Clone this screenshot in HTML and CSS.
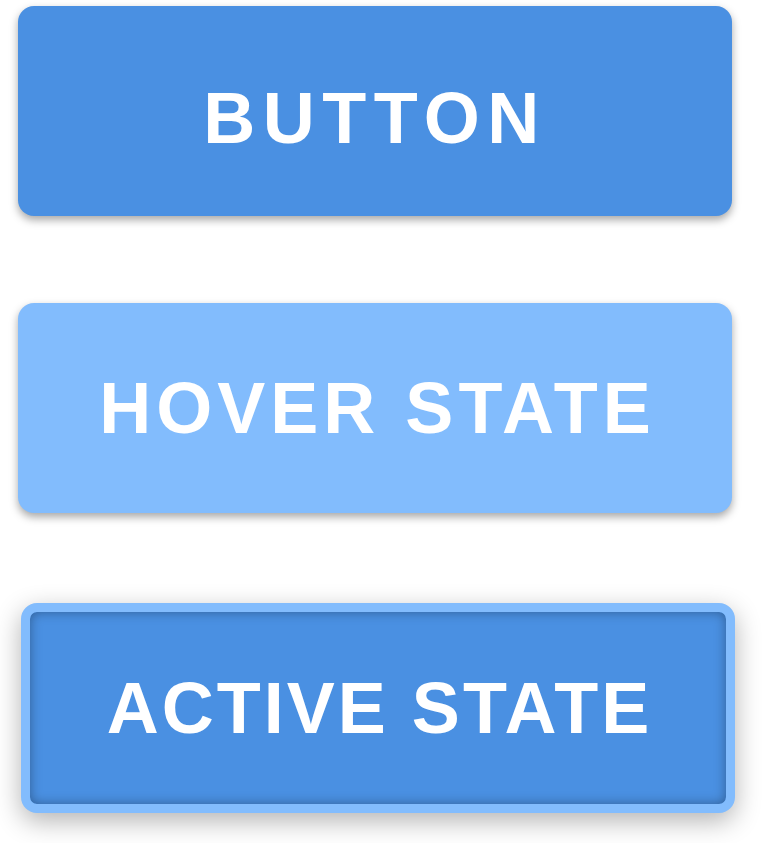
FILE: index.html
```html
<!DOCTYPE html>
<html lang="en">
<head>
    <meta charset="UTF-8">
    <meta name="viewport" content="width=device-width, initial-scale=1.0">
    <title>Button States</title>
    <link rel="stylesheet" href="styles.css">
</head>
<body>
    <div class="button-list">
        <!-- Default state -->
        <button class="btn btn-default">BUTTON</button>

        <!-- Hover state -->
        <button class="btn btn-hover">HOVER STATE</button>

        <!-- Active (pressed) state -->
        <button class="btn btn-active">ACTIVE STATE</button>
    </div>
</body>
</html>
```

FILE: styles.css
```css
body {
    margin: 0;
    background-color: #fff;
    font-family: "Liberation Sans", Arial, Helvetica, sans-serif;
}

.button-list {
    display: flex;
    flex-direction: column;
    align-items: flex-start;
    gap: 87px;
    padding: 6px 0 33px 18px;
}

.btn {
    width: 714px;
    height: 210px;
    border: none;
    border-radius: 16px;
    background-color: #4a90e2;
    color: #fff;
    font-family: inherit;
    font-size: 72px;
    font-weight: bold;
    letter-spacing: 7px;
    box-shadow: 0 4px 8px rgba(0, 0, 0, 0.35);
    cursor: pointer;
    padding: 0;
}

.btn-default {
    padding-top: 14px;
    letter-spacing: 7.5px;
}

.btn-hover {
    background-color: #82bcfd;
    letter-spacing: 5px;
    text-indent: 5px;
}

.btn-active {
    border: 9px solid #82bcfd;
    letter-spacing: 3px;
    text-indent: 3px;
    transform: translate(3px, 3px);
    box-shadow: inset 0 0 12px rgba(0, 0, 0, 0.35), 0 8px 26px rgba(0, 0, 0, 0.3);
}
```
